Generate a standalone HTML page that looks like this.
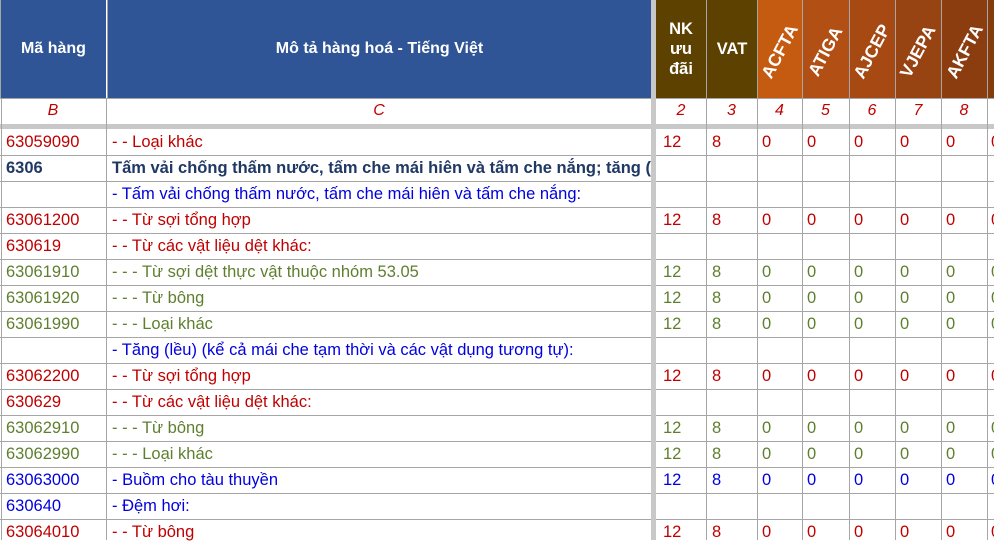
<!DOCTYPE html>
<html><head><meta charset="utf-8"><style>
*{margin:0;padding:0;box-sizing:border-box}
body{width:994px;height:540px;overflow:hidden;background:#fff;position:relative;font-family:"Liberation Sans",Arial,sans-serif;font-size:16.5px}
.a{position:absolute}
.hl{position:absolute;left:0;width:994px;height:1px;background:#a6a6a6}
.vl{position:absolute;top:98px;height:442px;width:1px;background:#a6a6a6}
.h{position:absolute;top:0;height:98px;color:#fff;font-weight:bold;display:flex;align-items:center;justify-content:center;text-align:center;font-size:16px}
.rot{transform:rotate(-62deg);white-space:nowrap;font-size:17.5px;display:inline-block;margin-top:4px}
.n{position:absolute;top:98px;height:26px;line-height:26px;color:#c00000;font-style:italic;text-align:center;font-size:16px}
.t{position:absolute;height:26px;line-height:26px;white-space:nowrap}
.r{color:#c00000}.g{color:#5f7f2f}.b{color:#0000e0}.k{color:#1f3864;font-weight:bold}
</style></head><body>
<div class="h" style="left:0;width:106px;background:#2f5597;border-left:1px solid #a6a6a6">Mã hàng</div>
<div class="h" style="left:107px;width:544px;background:#2f5597;border-left:1px solid #a6a6a6">Mô tả hàng hoá - Tiếng Việt</div>
<div class="h" style="left:656px;width:50px;background:#5c4100;line-height:20px;font-size:16.5px">NK<br>ưu<br>đãi</div>
<div class="h" style="left:706px;width:51px;background:#5c4100;border-left:1px solid #a6a6a6;font-size:16.5px">VAT</div>
<div class="h" style="left:757px;width:45px;background:#c55a11;border-left:1px solid #a6a6a6"><span class="rot">ACFTA</span></div>
<div class="h" style="left:802px;width:47px;background:#b24f14;border-left:1px solid #a6a6a6"><span class="rot">ATIGA</span></div>
<div class="h" style="left:849px;width:46px;background:#a64913;border-left:1px solid #a6a6a6"><span class="rot">AJCEP</span></div>
<div class="h" style="left:895px;width:46px;background:#984312;border-left:1px solid #a6a6a6"><span class="rot">VJEPA</span></div>
<div class="h" style="left:941px;width:46px;background:#8b3d10;border-left:1px solid #a6a6a6"><span class="rot">AKFTA</span></div>
<div class="h" style="left:987px;width:7px;background:#843c0c;border-left:1px solid #a6a6a6"></div>

<div class="hl" style="top:98px"></div>
<div class="n" style="left:0;width:106px">B</div>
<div class="n" style="left:107px;width:544px">C</div>
<div class="n" style="left:656px;width:50px">2</div>
<div class="n" style="left:706px;width:51px">3</div>
<div class="n" style="left:757px;width:45px">4</div>
<div class="n" style="left:802px;width:47px">5</div>
<div class="n" style="left:849px;width:46px">6</div>
<div class="n" style="left:895px;width:46px">7</div>
<div class="n" style="left:941px;width:46px">8</div>
<div class="a" style="left:0;top:124px;width:994px;height:5px;background:#c8c8c8"></div>

<div class="vl" style="left:1px"></div>
<div class="vl" style="left:106px"></div>
<div class="vl" style="left:706px"></div>
<div class="vl" style="left:757px"></div>
<div class="vl" style="left:802px"></div>
<div class="vl" style="left:849px"></div>
<div class="vl" style="left:895px"></div>
<div class="vl" style="left:941px"></div>
<div class="vl" style="left:987px"></div>

<div class="hl" style="top:155px"></div><div class="hl" style="top:181px"></div><div class="hl" style="top:207px"></div><div class="hl" style="top:233px"></div><div class="hl" style="top:259px"></div><div class="hl" style="top:285px"></div><div class="hl" style="top:311px"></div><div class="hl" style="top:337px"></div><div class="hl" style="top:363px"></div><div class="hl" style="top:389px"></div><div class="hl" style="top:415px"></div><div class="hl" style="top:441px"></div><div class="hl" style="top:467px"></div><div class="hl" style="top:493px"></div><div class="hl" style="top:519px"></div>

<div id="rows"></div>
<div class="t r" style="top:129px;left:6px">63059090</div><div class="t r" style="top:129px;left:112px">- - Loại khác</div>
<div class="t k" style="top:155px;left:6px">6306</div><div class="t k" style="top:155px;left:112px;width:539px;overflow:hidden">Tấm vải chống thấm nước, tấm che mái hiên và tấm che nắng; tăng (lều)</div>
<div class="t b" style="top:181px;left:112px">- Tấm vải chống thấm nước, tấm che mái hiên và tấm che nắng:</div>
<div class="t r" style="top:207px;left:6px">63061200</div><div class="t r" style="top:207px;left:112px">- - Từ sợi tổng hợp</div>
<div class="t r" style="top:233px;left:6px">630619</div><div class="t r" style="top:233px;left:112px">- - Từ các vật liệu dệt khác:</div>
<div class="t g" style="top:259px;left:6px">63061910</div><div class="t g" style="top:259px;left:112px">- - - Từ sợi dệt thực vật thuộc nhóm 53.05</div>
<div class="t g" style="top:285px;left:6px">63061920</div><div class="t g" style="top:285px;left:112px">- - - Từ bông</div>
<div class="t g" style="top:311px;left:6px">63061990</div><div class="t g" style="top:311px;left:112px">- - - Loại khác</div>
<div class="t b" style="top:337px;left:112px">- Tăng (lều) (kể cả mái che tạm thời và các vật dụng tương tự):</div>
<div class="t r" style="top:363px;left:6px">63062200</div><div class="t r" style="top:363px;left:112px">- - Từ sợi tổng hợp</div>
<div class="t r" style="top:389px;left:6px">630629</div><div class="t r" style="top:389px;left:112px">- - Từ các vật liệu dệt khác:</div>
<div class="t g" style="top:415px;left:6px">63062910</div><div class="t g" style="top:415px;left:112px">- - - Từ bông</div>
<div class="t g" style="top:441px;left:6px">63062990</div><div class="t g" style="top:441px;left:112px">- - - Loại khác</div>
<div class="t b" style="top:467px;left:6px">63063000</div><div class="t b" style="top:467px;left:112px">- Buồm cho tàu thuyền</div>
<div class="t b" style="top:493px;left:6px">630640</div><div class="t b" style="top:493px;left:112px">- Đệm hơi:</div>
<div class="t r" style="top:519px;left:6px">63064010</div><div class="t r" style="top:519px;left:112px">- - Từ bông</div>

<div class="a" style="left:651px;top:0;width:5px;height:540px;background:#c8c8c8"></div>

<script>
var rows=[[129,'r'],[207,'r'],[259,'g'],[285,'g'],[311,'g'],[363,'r'],[415,'g'],[441,'g'],[467,'b'],[519,'r']];
var xs=[663,712,762,807,854,900,946,991],v=['12','8','0','0','0','0','0','0'],h='';
rows.forEach(function(r){xs.forEach(function(x,i){h+='<div class="t '+r[1]+'" style="top:'+r[0]+'px;left:'+x+'px">'+v[i]+'</div>';});});
document.getElementById('rows').innerHTML=h;
</script>
</body></html>
